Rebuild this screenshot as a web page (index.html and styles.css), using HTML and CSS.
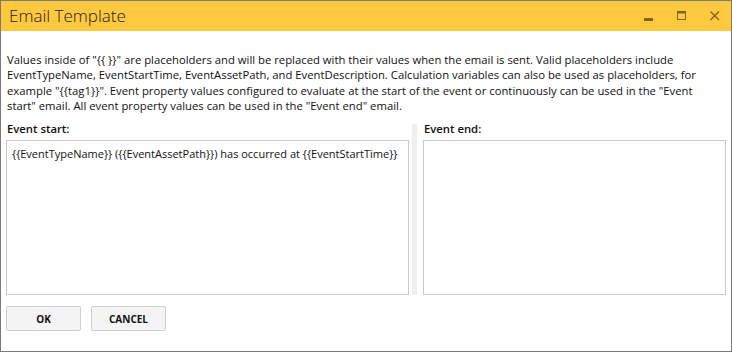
FILE: index.html
```html
<!DOCTYPE html>
<html lang="en">
<head>
    <meta charset="UTF-8">
    <title>Email Template</title>
    <link rel="stylesheet" href="styles.css">
</head>
<body>

<div class="window">
    <div class="titlebar">
        <span class="title">Email Template</span>
        <div class="window-buttons">
            <span class="win-btn minimize"><svg width="10" height="10" viewBox="0 0 10 10"><rect x="0" y="7" width="9" height="3" fill="currentColor"/></svg></span>
            <span class="win-btn maximize"><svg width="10" height="10" viewBox="0 0 10 10"><rect x="0.5" y="0.5" width="8" height="8" fill="none" stroke="currentColor"/><rect x="0" y="0" width="9" height="2.5" fill="currentColor"/></svg></span>
            <span class="win-btn close"><svg width="10" height="10" viewBox="0 0 10 10"><path d="M0.5 0.5 L9 9 M9 0.5 L0.5 9" stroke="currentColor" stroke-width="1.4"/></svg></span>
        </div>
    </div>

    <div class="content">
        <p class="info">Values inside of "{{ }}" are placeholders and will be replaced with their values when the email is sent. Valid placeholders include EventTypeName, EventStartTime, EventAssetPath, and EventDescription. Calculation variables can also be used as placeholders, for example "{{tag1}}". Event property values configured to evaluate at the start of the event or continuously can be used in the "Event start" email. All event property values can be used in the "Event end" email.</p>

        <div class="editors">
            <div class="pane pane-start">
                <label class="pane-label">Event start:</label>
                <textarea class="editor">{{EventTypeName}} ({{EventAssetPath}}) has occurred at {{EventStartTime}}</textarea>
            </div>
            <div class="splitter"></div>
            <div class="pane pane-end">
                <label class="pane-label">Event end:</label>
                <textarea class="editor"></textarea>
            </div>
        </div>

        <div class="actions">
            <button>OK</button>
            <button>CANCEL</button>
        </div>
    </div>
</div>

</body>
</html>
```

FILE: styles.css
```css
body, html {
    font-family: 'Open Sans', 'Noto Sans', sans-serif;
    margin: 0;
    padding: 0;
    background: #fff;
}

.window {
    width: 732px;
    height: 352px;
    box-sizing: border-box;
    border: 1px solid #7a7a7a;
    display: flex;
    flex-direction: column;
}

.titlebar {
    height: 30px;
    background-color: #fec93f;
    display: flex;
    align-items: center;
    justify-content: space-between;
}

.title {
    font-size: 17px;
    font-weight: 300;
    color: #222;
    padding-left: 8px;
    margin-top: -2px;
}

.window-buttons {
    display: flex;
    color: #80651c;
}

.win-btn {
    width: 33px;
    height: 30px;
    display: flex;
    align-items: center;
    justify-content: center;
}

.win-btn svg {
    display: block;
}

.content {
    flex-grow: 1;
    padding: 0 5px 0 5px;
    display: flex;
    flex-direction: column;
}

.info {
    font-size: 11.3px;
    line-height: 15.3px;
    color: #111;
    max-width: 700px;
    margin: 21px 0 7px 1px;
}

.editors {
    display: flex;
    height: 175px;
}

.pane {
    display: flex;
    flex-direction: column;
}

.pane-start {
    flex-grow: 1;
}

.pane-end {
    width: 303px;
}

.pane-label {
    font-size: 11.3px;
    font-weight: 600;
    color: #111;
    height: 19px;
    line-height: 15px;
    padding-top: 1px;
    padding-left: 1px;
}

.editor {
    flex-grow: 1;
    resize: none;
    border: 1px solid #c8c8c8;
    font-family: 'Open Sans', 'Noto Sans', sans-serif;
    font-size: 11px;
    line-height: 15px;
    color: #111;
    padding: 5px 5px;
    margin: 0;
    outline: none;
}

.splitter {
    width: 5px;
    background: #f0eeee;
    margin: 4px 6px 0 3px;
}

.actions {
    display: flex;
    gap: 10px;
    margin-top: 11px;
}

button {
    width: 75px;
    height: 25px;
    background-color: #f4f4f4;
    border: 1px solid #cfcfcf;
    border-radius: 2px;
    font-family: 'Open Sans', 'Noto Sans', sans-serif;
    font-size: 10px;
    font-weight: 700;
    color: #111;
    cursor: pointer;
}
```
